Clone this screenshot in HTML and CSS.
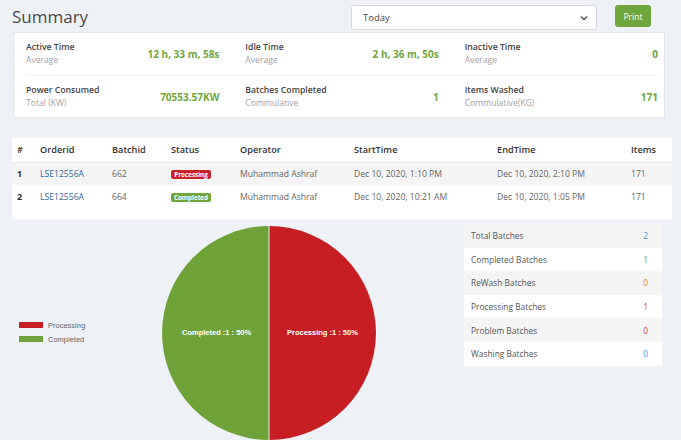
FILE: index.html
```html
<!DOCTYPE html>
<html>
<head>
<meta charset="utf-8">
<link rel="stylesheet" href="styles.css">
</head>
<body>
<div class="header">
  <h1 class="title">Summary</h1>
  <div class="controls">
    <div class="select"><span>Today</span>
      <svg class="chev" width="8" height="6" viewBox="0 0 8 6"><path d="M1 1.5 L4 4.5 L7 1.5" fill="none" stroke="#555" stroke-width="1.5"/></svg>
    </div>
    <button class="print">Print</button>
  </div>
</div>

<div class="card summary">
  <div class="srow">
    <div class="cell"><div><div class="lbl">Active Time</div><div class="sub">Average</div></div><div class="val">12 h, 33 m, 58s</div></div>
    <div class="cell"><div><div class="lbl">Idle Time</div><div class="sub">Average</div></div><div class="val">2 h, 36 m, 50s</div></div>
    <div class="cell"><div><div class="lbl">Inactive Time</div><div class="sub">Average</div></div><div class="val">0</div></div>
  </div>
  <div class="srow">
    <div class="cell"><div><div class="lbl">Power Consumed</div><div class="sub">Total (KW)</div></div><div class="val">70553.57KW</div></div>
    <div class="cell"><div><div class="lbl">Batches Completed</div><div class="sub">Commulative</div></div><div class="val">1</div></div>
    <div class="cell"><div><div class="lbl">Items Washed</div><div class="sub">Commulative(KG)</div></div><div class="val">171</div></div>
  </div>
</div>

<div class="card tablecard">
  <table class="orders">
    <colgroup>
      <col class="c1"><col class="c2"><col class="c3"><col class="c4"><col class="c5"><col class="c6"><col class="c7"><col class="c8">
    </colgroup>
    <thead>
      <tr><th>#</th><th>Orderid</th><th>Batchid</th><th>Status</th><th>Operator</th><th>StartTime</th><th>EndTime</th><th>Items</th></tr>
    </thead>
    <tbody>
      <tr class="odd"><td class="num">1</td><td><a class="link">LSE12556A</a></td><td>662</td><td><span class="badge red">Processing</span></td><td>Muhammad Ashraf</td><td>Dec 10, 2020, 1:10 PM</td><td>Dec 10, 2020, 2:10 PM</td><td>171</td></tr>
      <tr><td class="num">2</td><td><a class="link">LSE12556A</a></td><td>664</td><td><span class="badge green">Completed</span></td><td>Muhammad Ashraf</td><td>Dec 10, 2020, 10:21 AM</td><td>Dec 10, 2020, 1:05 PM</td><td>171</td></tr>
    </tbody>
  </table>
</div>

<div class="bottom">
  <div class="legend">
    <div class="litem"><span class="sw sw-red"></span>Processing</div>
    <div class="litem"><span class="sw sw-green"></span>Completed</div>
  </div>
  <div class="pie">
    <svg width="214" height="214" viewBox="0 0 214 214">
      <path d="M107 107 L107 0 A107 107 0 0 1 107 214 Z" fill="#c71e24"/>
      <path d="M107 107 L107 214 A107 107 0 0 1 107 0 Z" fill="#6fa33a"/>
      <line x1="107" y1="0" x2="107" y2="214" stroke="#f3ece4" stroke-width="1"/>
    </svg>
    <span class="plabel pl-left">Completed :1 : 50%</span>
    <span class="plabel pl-right">Processing :1 : 50%</span>
  </div>
  <div class="stats">
    <div class="strow"><span>Total Batches</span><span class="c-blue">2</span></div>
    <div class="strow"><span>Completed Batches</span><span class="c-green">1</span></div>
    <div class="strow"><span>ReWash Batches</span><span class="c-orange">0</span></div>
    <div class="strow"><span>Processing Batches</span><span class="c-red">1</span></div>
    <div class="strow"><span>Problem Batches</span><span class="c-red">0</span></div>
    <div class="strow"><span>Washing Batches</span><span class="c-blue">0</span></div>
  </div>
</div>
</body>
</html>
```

FILE: styles.css
```css
* { box-sizing: border-box; }
html, body { margin: 0; padding: 0; }
body {
  background: #eef1f5;
  font-family: "Open Sans", "Noto Sans", sans-serif;
  color: #555;
  width: 681px;
  height: 440px;
  overflow: hidden;
}
.header {
  display: flex;
  justify-content: space-between;
  align-items: flex-start;
  padding: 5px 30px 0 12px;
  height: 32px;
}
.title {
  margin: 0;
  font-size: 17px;
  font-weight: 400;
  color: #4a4a4a;
  line-height: 24px;
}
.controls { display: flex; align-items: flex-start; gap: 18px; }
.select {
  width: 246px;
  height: 25px;
  background: #fff;
  border: 1px solid #d6d9dd;
  border-radius: 3px;
  display: flex;
  align-items: center;
  justify-content: space-between;
  padding: 0 8px 0 11px;
  font-size: 9.5px;
  color: #444;
}
.print {
  width: 36px;
  height: 22px;
  border: none;
  border-radius: 3px;
  background: #6fa63b;
  color: #fff;
  font-family: inherit;
  font-size: 8.5px;
  padding: 0;
}
.card {
  background: #fff;
  border: 1px solid #e2e5e9;
}
.summary {
  margin-left: 13px;
  width: 652px;
  height: 86px;
  padding: 0 6px 0 12px;
}
.srow {
  display: grid;
  grid-template-columns: repeat(3, 1fr);
  column-gap: 26px;
  height: 42px;
  align-items: center;
}
.srow + .srow { border-top: 1px solid #eceef1; }
.cell { display: flex; justify-content: space-between; align-items: center; }
.lbl { font-size: 8.7px; font-weight: 600; color: #444; line-height: 13px; }
.sub { font-size: 8.6px; color: #a2a2a2; line-height: 13px; }
.val { font-size: 10px; font-weight: 700; color: #6fa63b; }
.tablecard {
  margin: 20px 9px 0 12px;
  width: 660px;
  height: 81px;
  border: none;
}
.orders {
  width: 660px;
  border-collapse: collapse;
  table-layout: fixed;
  font-size: 8.6px;
}
.c1 { width: 23px; } .c2 { width: 72px; } .c3 { width: 59px; } .c4 { width: 69px; }
.c5 { width: 114px; } .c6 { width: 143px; } .c7 { width: 134px; } .c8 { width: 46px; }
.orders th, .orders td {
  text-align: left;
  padding: 0 0 0 5px;
  white-space: nowrap;
}
.orders th { height: 24px; font-size: 9.2px; font-weight: 600; color: #333; border-bottom: 1px solid #e6e8eb; }
.orders td { height: 23px; color: #666; }
.orders td.num { font-weight: 700; color: #333; font-size: 9px; }
.orders tr.odd td { background: #f5f5f5; }
.link { color: #2f6a9f; }
.badge {
  display: inline-block;
  font-size: 6.3px;
  font-weight: 700;
  color: #fff;
  width: 40px;
  text-align: center;
  line-height: 9px;
  border-radius: 2px;
}
.badge.red { background: #c9202a; }
.badge.green { background: #6fa63b; }
.bottom {
  display: flex;
  align-items: flex-start;
  margin-top: 6px;
}
.legend {
  width: 162px;
  padding: 93px 0 0 19px;
  font-family: "Liberation Sans", Arial, sans-serif;
  font-size: 7.5px;
  color: #666;
}
.litem { display: flex; align-items: center; height: 14px; }
.sw { display: inline-block; width: 24px; height: 6px; margin-right: 5px; }
.sw-red { background: #c71e24; }
.sw-green { background: #6fa33a; }
.pie { position: relative; width: 214px; height: 214px; margin-top: 1px; }
.pie svg { display: block; }
.plabel {
  position: absolute;
  top: 102px;
  font-family: "Liberation Sans", Arial, sans-serif;
  font-size: 7.5px;
  font-weight: 700;
  color: #fff;
  white-space: nowrap;
}
.pl-left { left: 20px; }
.pl-right { left: 125px; }
.stats {
  margin-left: 88px;
  margin-top: -1px;
  width: 198px;
  font-size: 8.4px;
  color: #555;
}
.strow {
  display: flex;
  justify-content: space-between;
  align-items: center;
  height: 23.6px;
  padding: 0 14px 0 7px;
  background: #fff;
}
.strow:nth-child(odd) { background: #f5f5f5; }
.c-blue { color: #3a9ad9; }
.c-green { color: #6fa63b; }
.c-orange { color: #e0883a; }
.c-red { color: #d0454c; }
```
